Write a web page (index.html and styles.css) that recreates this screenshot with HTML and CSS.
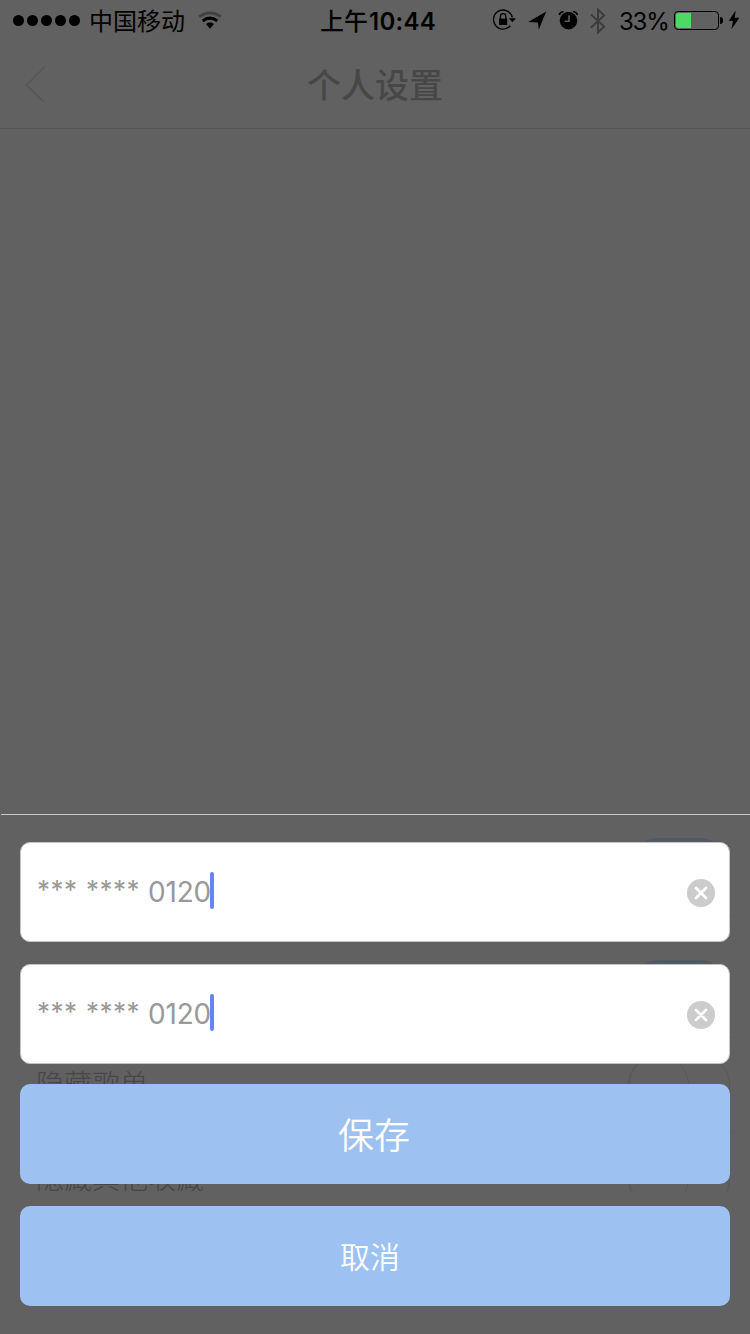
FILE: index.html
```html
<!DOCTYPE html>
<html lang="zh-CN">
<head>
<meta charset="utf-8">
<title>个人设置</title>
<link rel="stylesheet" href="styles.css">
</head>
<body>
<div class="screen">
  <header class="status">
    <div class="status-left">
      <div class="signal"><i></i><i></i><i></i><i></i><i></i></div>
      <span class="carrier">中国移动</span>
      <svg class="wifi" width="24" height="18" viewBox="0 0 24 18" fill="none">
        <path d="M1.2 5.6Q12-2 22.8 5.6" stroke="#414141" stroke-width="2.6"/>
        <path d="M4.7 10Q12 4.3 19.3 10" stroke="#000" stroke-width="3"/>
        <path d="M8 13Q12 10.2 16 13L12 17.8Z" fill="#000"/>
      </svg>
    </div>
    <div class="time"><span>上午</span><b>10:44</b></div>
    <div class="status-right">
      <svg class="lock" width="24" height="22" viewBox="0 0 24 22" fill="none" stroke="#000">
        <path d="M20.3 8.5A9.5 9.5 0 1 0 18.3 16.7" stroke-width="1.4"/>
        <path d="M16.8 9.3H24L20.4 13.2Z" fill="#000" stroke="none"/>
        <path d="M7 9.6H15.2V16H7Z" fill="#000" stroke="none"/>
        <path d="M8.4 10V7.4a2.7 2.7 0 0 1 5.4 0V10" stroke-width="1.3"/>
      </svg>
      <svg class="arrow" width="20" height="20" viewBox="0 0 20 20"><path d="M18.2 1.6L10.8 19.6L9.9 12.6L.2 12Z"/></svg>
      <svg class="alarm" width="20" height="20" viewBox="0 0 20 20" fill="none">
        <circle cx="10.5" cy="10.6" r="8.8" fill="#000"/>
        <path d="M1.2 5Q2 2 5.6 1.5M19.6 5Q18.8 2 15.2 1.5" stroke="#000" stroke-width="1.7"/>
        <path d="M11 5.3V11.2H6.8" stroke="#616161" stroke-width="1.5"/>
      </svg>
      <svg class="bluetooth" width="16" height="28" viewBox="0 0 16 28" fill="none" stroke="#3b3b3b" stroke-width="1.9"><path d="M1 7.5L14.2 19.5L8 25.5V2.5L14.2 8.5L1 20.5"/></svg>
      <span class="percent">33%</span>
      <div class="battery"><div class="charge"></div></div>
      <i class="battery-tip"></i>
      <svg class="bolt" width="12" height="20" viewBox="0 0 12 20"><path d="M7.6.5L.7 11H5L3.3 19.5L11.4 7.8H6.8Z"/></svg>
    </div>
  </header>
  <nav class="nav">
    <svg class="back" width="21" height="38" viewBox="0 0 21 38" fill="none" stroke="#565656" stroke-width="1.3"><path d="M19.5 1L1.5 19L19.5 36.5"/></svg>
    <h1>个人设置</h1>
  </nav>
  <main class="settings">
    <div class="row first"><span></span><div class="switch on"></div></div>
    <div class="row second"><span></span><div class="switch on"></div></div>
    <div class="row"><span>隐藏歌单</span><div class="switch"><i></i></div></div>
    <div class="row"><span>隐藏其他收藏</span><div class="switch"><i></i></div></div>
  </main>
  <section class="sheet">
    <div class="field">
      <span class="stars s3">***</span><span class="stars s4">****</span><span class="digits">0120</span><i class="caret"></i>
      <svg class="clear" width="28" height="28" viewBox="0 0 28 28"><circle cx="14" cy="14" r="14" fill="#ccc"/><path d="M9 9L19 19M19 9L9 19" stroke="#fff" stroke-width="2.7" stroke-linecap="round"/></svg>
    </div>
    <div class="field">
      <span class="stars s3">***</span><span class="stars s4">****</span><span class="digits">0120</span><i class="caret"></i>
      <svg class="clear" width="28" height="28" viewBox="0 0 28 28"><circle cx="14" cy="14" r="14" fill="#ccc"/><path d="M9 9L19 19M19 9L9 19" stroke="#fff" stroke-width="2.7" stroke-linecap="round"/></svg>
    </div>
    <button class="save">保存</button>
    <button class="cancel">取消</button>
  </section>
</div>
</body>
</html>
```
FILE: styles.css
```css
* { box-sizing: border-box; }
body { margin: 0; font-family: Inter, "Noto Sans CJK SC", sans-serif; }
.screen { position: relative; width: 750px; height: 1334px; overflow: hidden; background: #616161; }
svg { display: block; flex: none; }

.status { display: grid; grid-template-columns: 320px 172px 1fr; height: 40px; color: #000; }
.status-left, .status-right, .time { display: flex; align-items: center; white-space: nowrap; height: 40px; }
.signal { display: flex; gap: 3px; margin-left: 13px; }
.signal i { width: 11px; height: 11px; border-radius: 50%; background: #000; }
.carrier { margin-left: 9px; width: 96px; padding-top: 4px; font-size: 24px; line-height: 40px; }
.wifi { margin-left: 13px; }
.time { font-size: 24px; line-height: 40px; }
.time span { width: 49px; padding-top: 4px; font-weight: 500; }
.time b { padding-top: 3px; font-weight: 600; font-size: 24px; letter-spacing: 0.3px; }
.arrow { margin-left: 12px; }
.alarm { margin-left: 10px; }
.bluetooth { margin-left: 12px; margin-top: 1px; }
.percent { width: 50px; margin-left: 13px; padding-top: 3px; font-size: 24px; line-height: 40px; letter-spacing: -1.2px; }
.battery { flex: none; width: 45px; height: 19px; margin-left: 5px; padding: 1px; border: 1px solid #000; border-radius: 4px; }
.charge { width: 15px; height: 15px; background: #4cd964; border-radius: 2px 0 0 2px; }
.battery-tip { width: 3px; height: 7px; margin-left: 1px; background: #000; border-radius: 0 3px 3px 0; }
.bolt { margin-left: 5px; }

.nav { display: grid; grid-template-columns: 1fr auto 1fr; align-items: center; height: 89px; border-bottom: 1px solid #555; }
.back { margin: 2px 0 0 25px; }
.nav h1 { margin: 0; padding-top: 4px; font-size: 34px; line-height: 84px; font-weight: 500; color: #474747; }

.settings { height: 1063px; padding-top: 693px; overflow: hidden; }
.row { display: flex; justify-content: space-between; align-items: center; height: 94px; margin: 0 12px 0 24px; padding: 0 8px 0 12px; border-bottom: 1px solid #5d5d5d; font-size: 28px; line-height: 28px; font-weight: 300; color: #464646; }
.row span { padding-top: 1px; }
.second { margin-top: 28px; }
.switch { width: 102px; height: 62px; border: 1px solid #575757; border-radius: 31px; }
.switch i { display: block; width: 60px; height: 60px; border: 1px solid #595959; border-radius: 50%; }
.switch.on { background: #505861; border-color: #505861; }

.sheet { position: absolute; left: 0; right: 0; bottom: 0; height: 520px; margin-left: 1px; padding: 27px 20px 28px 19px; border-top: 1px solid #c2c8c5; display: flex; flex-direction: column; }
.field { display: flex; align-items: center; height: 100px; margin-bottom: 22px; padding: 0 14px 0 16px; border: 1px solid #c4c4c4; border-radius: 10px; background: #fff; color: #999; font-size: 28px; line-height: 36px; }
.field + .field { margin-bottom: 20px; }
.stars { padding-bottom: 5px; font-size: 26px; letter-spacing: 0.5px; font-weight: 400; }
.s3 { width: 49px; }
.s4 { width: 62px; }
.digits { width: 62px; white-space: nowrap; font-weight: 400; letter-spacing: -0.2px; }
.caret { width: 4px; height: 37px; margin-top: -3px; border-radius: 2px; background: #6684f4; }
.clear { margin: 2px 0 0 auto; }
.save, .cancel { height: 100px; padding: 0; border: 0; border-radius: 10px; background: #9dc2f1; color: #fff; font-family: inherit; font-weight: 350; }
.save { margin-bottom: 22px; padding: 0 2px 3px 0; font-size: 36px; }
.cancel { padding: 0 10px 2px 0; font-size: 30px; }
```
